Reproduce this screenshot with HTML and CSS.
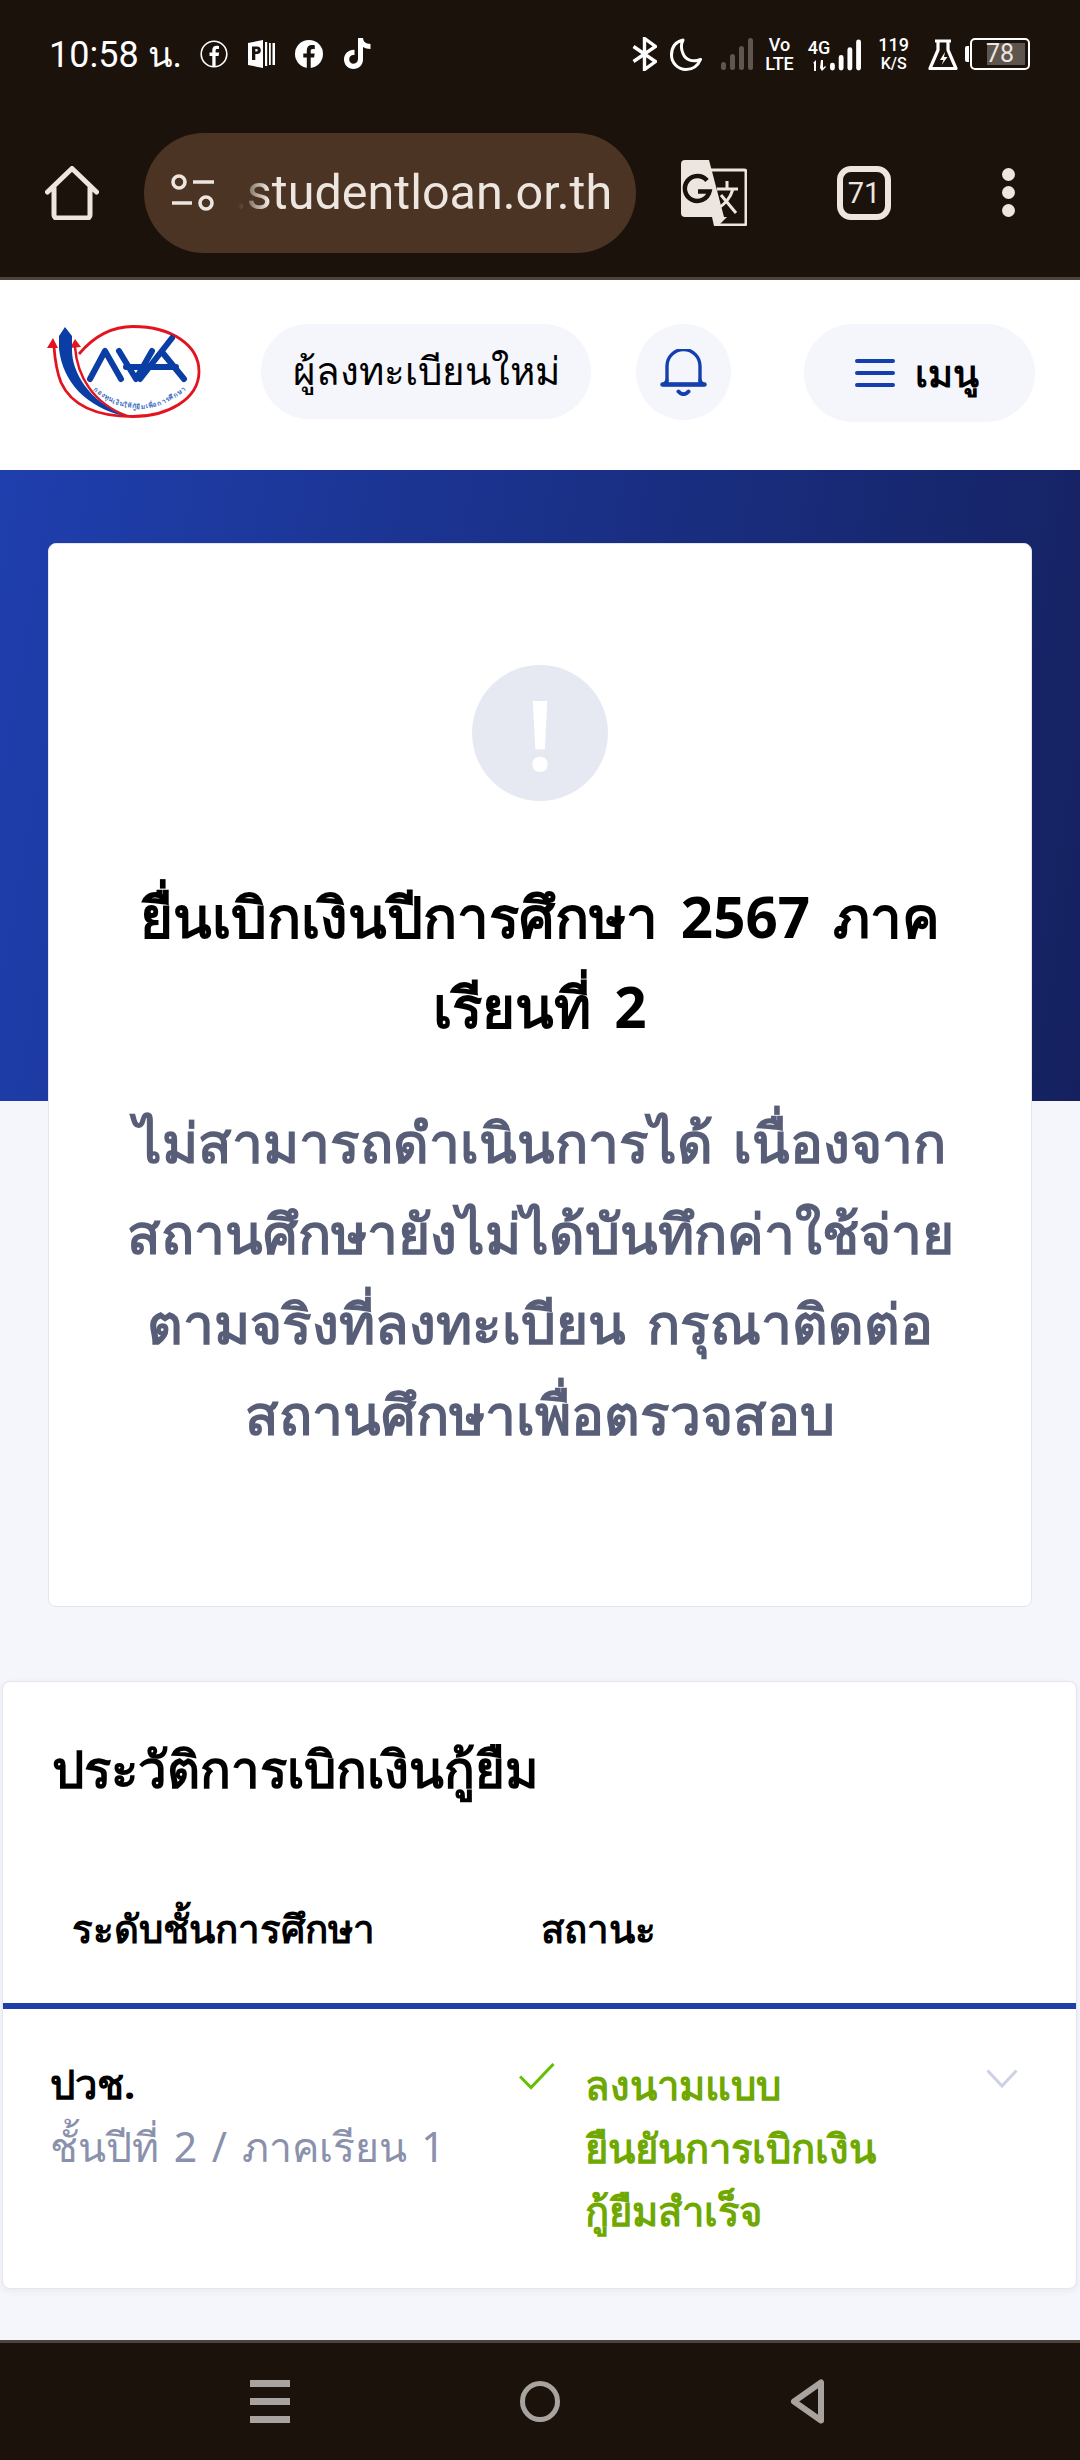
FILE: index.html
```html
<!DOCTYPE html>
<html lang="th">
<head>
<meta charset="utf-8">
<title>ประวัติการเบิกเงินกู้ยืม</title>
<link rel="stylesheet" href="styles.css">
</head>
<body>
<div class="chrome">
  <div class="status">
    <div class="status-left">
      <span class="clock">10:58 น.</span>
      <svg class="si" width="28" height="28" viewBox="0 0 28 28"><circle cx="14" cy="14" r="12.8" fill="none" stroke="#fff" stroke-width="1.6"/><path d="M15.600 26.500V16h3l.5-3.400h-3.500v-2c0-1 .5-1.700 1.800-1.700H19V6c-.6-.1-1.500-.2-2.400-.2-2.600 0-4.300 1.500-4.300 4.300v2.500H9.500V16h2.800v10.500z" fill="#fff"/></svg>
      <svg class="si" width="27" height="28" viewBox="0 0 27 28"><path d="M0 3l15-3v28L0 25z" fill="#fff"/><path d="M4 6.500h5a3.800 3.800 0 010 7.600H7.300V20H4z" fill="#1a120b"/><path d="M7.300 9v2.600h1.200a1.300 1.300 0 000-2.600z" fill="#fff"/><path d="M17 2h2.200v24H17zM21 3h1.800v22H21zM24.500 3H27v22h-2.500z" fill="#fff"/></svg>
      <svg class="si" width="28" height="28" viewBox="0 0 28 28"><circle cx="14" cy="14" r="14" fill="#fff"/><path d="M15.700 28V17.500h3.400l.6-4h-4v-2.400c0-1.200.6-2.100 2.200-2.100h1.900V5.300c-.7-.1-1.800-.3-3-.3-3 0-5 1.800-5 5.200v3.300H8.300v4h3.500V28z" fill="#1a120b"/></svg>
      <svg class="si tiktok" width="29" height="33" viewBox="0 0 29 33"><path d="M15 1h5c.3 3.500 2.600 5.800 7.500 6v5c-3 0-5.700-.7-7.500-2v12.500C20 28 15.800 32 10.500 32S1 28 1 22.500 5.500 12.500 11.500 12.800v5.300c-3-.5-5.300 1-5.300 4.400 0 2.400 1.900 4.300 4.300 4.300s4.500-1.900 4.500-4.700z" fill="#fff"/></svg>
    </div>
    <div class="status-right">
      <svg class="sb-bt" width="25" height="34" viewBox="0 0 25 34"><path d="M1.500 9.500l22 15-11 8V1.500l11 8-22 15" fill="none" stroke="#fff" stroke-width="3.400"/></svg>
      <svg class="sb-moon" width="32" height="33" viewBox="0 0 32 33"><path d="M13 2C5 4 1.500 10 1.500 17c0 8 6.500 14.500 14.500 14.500 7 0 12-4 14.500-10-8 3-15 .5-17.500-6C11 11 11 6 13 2z" fill="none" stroke="#fff" stroke-width="3" stroke-linejoin="round"/></svg>
      <svg class="sb-sig1" width="32" height="32" viewBox="0 0 32 32"><g fill="#5f574f"><rect x="0" y="24" width="5" height="8" rx="2.500"/><rect x="9" y="16" width="5" height="16" rx="2.500"/><rect x="18" y="8" width="5" height="24" rx="2.500"/><rect x="27" y="0" width="5" height="32" rx="2.500"/></g></svg>
      <div class="netlabel sb-vo"><span>Vo</span><span>LTE</span></div>
      <div class="net4g">
        <div class="netlabel"><span>4G</span>
          <svg class="arrows" width="15" height="11" viewBox="0 0 15 11"><path d="M1 3l3-3v11H2V3.500zM9 0h2v8l2-2 1 1-4 4-2-3z" fill="#fff"/></svg>
        </div>
        <svg class="sig2" width="31" height="32" viewBox="0 0 32 32"><g fill="#fff"><rect x="0" y="24" width="5" height="8" rx="2.500"/><rect x="9" y="16" width="5" height="16" rx="2.500"/><rect x="18" y="8" width="5" height="24" rx="2.500"/><rect x="27" y="0" width="5" height="32" rx="2.500"/></g></svg>
      </div>
      <div class="netlabel speed"><span>119</span><span class="ks">K/S</span></div>
      <svg class="sb-flask" width="30" height="31" viewBox="0 0 30 31"><path d="M7 2h16M10 2v9L2 29.500h26L20 11V2" fill="none" stroke="#fff" stroke-width="3.200" stroke-linejoin="round"/><path d="M17 13l-5 8h3.500l-2 5 6-8h-3.500z" fill="#fff"/></svg>
      <div class="battery"><span class="cap"></span><div class="shell"><div class="level"></div><span class="pct">78</span></div></div>
    </div>
  </div>
  <div class="toolbar">
    <svg class="home" width="54" height="54" viewBox="0 0 54 54"><path d="M2.500 26L27 2.500 51.500 26M9 22v27a3 3 0 003 3h30a3 3 0 003-3V22" fill="none" stroke="#ede5df" stroke-width="5" stroke-linecap="round" stroke-linejoin="round"/></svg>
    <div class="urlbar">
      <svg width="43" height="37" viewBox="0 0 43 37"><g fill="none" stroke="#ede5df" stroke-width="3.600"><circle cx="8" cy="8" r="6"/><circle cx="35" cy="29" r="6"/><path d="M22 8h21M1 29h20"/></g></svg>
      <span class="url">.studentloan.or.th</span>
    </div>
    <svg class="translate" width="66" height="66" viewBox="0 0 66 66"><path d="M4 0h24l15 57H4a4 4 0 01-4-4V4a4 4 0 014-4z" fill="#ede5df"/><path d="M30 10h33a2 2 0 012 2v51a2 2 0 01-2 2H34" fill="none" stroke="#ede5df" stroke-width="3"/><path d="M31 57h15l-9 9h-4z" fill="#ede5df"/><path d="M26 20.500a12.500 12.500 0 10 2.500 11H17" fill="none" stroke="#1a120b" stroke-width="4.500"/><path d="M36 29h21M46 21v8M52 29c-3 10-8 15-16 20M40 35l15 18" fill="none" stroke="#ede5df" stroke-width="3"/></svg>
    <div class="tabs">71</div>
    <div class="dots"><i></i><i></i><i></i></div>
  </div>
</div>

<header class="site-head">
  <svg class="logo" width="154" height="93" viewBox="0 0 154 93">
    <path d="M32 29C48 10 66 1.500 86 1.500c39 0 66 19 66 45 0 28-32 45-66 45-36 0-61-10-72-34C9 45 8 35 7 22" fill="none" stroke="#e3141f" stroke-width="2.800"/>
    <path d="M0 23L6 13l5 10z" fill="#e3141f"/><path d="M23 23l5-9 6 8z" fill="#e3141f"/>
    <path d="M28 22c2 28 17 56 52 69" fill="none" stroke="#e3141f" stroke-width="2.500"/>
    <path d="M18 2l7 9v14c0 22 16 50 52 66C40 82 16 58 12 24V11z" fill="#0b3ea4"/>
    <path d="M43 54l15-28 16 28M72 26l17 28 16-28M79 42h20M93 54l32-41M115 27l22 27M101 42h28" fill="none" stroke="#0b3ea4" stroke-width="6" stroke-linecap="round" stroke-linejoin="round"/>
    <path id="logoarc" d="M46 65Q92 103 140 64" fill="none"/>
    <text class="logo-text"><textPath href="#logoarc" textLength="102">กองทุนเงินให้กู้ยืมเพื่อการศึกษา</textPath></text>
  </svg>
  <div class="pill user">ผู้ลงทะเบียนใหม่</div>
  <div class="bell"><svg width="47" height="47" viewBox="0 0 47 47"><path d="M7 34V17a16.500 16.500 0 0133 0v17" fill="none" stroke="#1440ae" stroke-width="3.400"/><path d="M7 31c0 2-2 3-4 4.500h41c-2-1.500-4-2.500-4-4.500" fill="none" stroke="#1440ae" stroke-width="3.400" stroke-linecap="round" stroke-linejoin="round"/><path d="M2.500 35.500h42" stroke="#1440ae" stroke-width="4.500" stroke-linecap="round"/><path d="M18.500 42.500c3 3.500 7 3.500 10 0" fill="none" stroke="#1440ae" stroke-width="4" stroke-linecap="round"/></svg></div>
  <div class="pill menu"><svg width="40" height="28" viewBox="0 0 40 28"><path d="M2 2h36M2 14h36M2 26h36" stroke="#1440ae" stroke-width="4" stroke-linecap="round"/></svg><span>เมนู</span></div>
</header>

<main class="page">
  <div class="hero"></div>
  <section class="alert-card">
    <div class="alert-icon">!</div>
    <h1>ยื่นเบิกเงินปีการศึกษา 2567 ภาค<br>เรียนที่ 2</h1>
    <p>ไม่สามารถดำเนินการได้ เนื่องจาก<br>สถานศึกษายังไม่ได้บันทึกค่าใช้จ่าย<br>ตามจริงที่ลงทะเบียน กรุณาติดต่อ<br>สถานศึกษาเพื่อตรวจสอบ</p>
  </section>
  <section class="history">
    <h2>ประวัติการเบิกเงินกู้ยืม</h2>
    <div class="thead"><span class="th-level">ระดับชั้นการศึกษา</span><span>สถานะ</span></div>
    <div class="row">
      <div class="level-col"><strong>ปวช.</strong><span>ชั้นปีที่ 2 / ภาคเรียน 1</span></div>
      <svg class="check" width="36" height="27" viewBox="0 0 36 27"><path d="M1 13.500l11 11L34.500 1" fill="none" stroke="#62c000" stroke-width="3"/></svg>
      <div class="state">ลงนามแบบ<br>ยืนยันการเบิกเงิน<br>กู้ยืมสำเร็จ</div>
      <svg class="chev" width="32" height="19" viewBox="0 0 32 19"><path d="M1.500 1.500L16 17 30.500 1.500" fill="none" stroke="#ccd2e4" stroke-width="3"/></svg>
    </div>
  </section>
</main>

<nav class="navbar">
  <svg width="40" height="43" viewBox="0 0 40 43"><path d="M0 3.500h40M0 21.500h40M0 39.500h40" stroke="#a8a39e" stroke-width="7"/></svg>
  <svg width="40" height="41" viewBox="0 0 40 41"><ellipse cx="20" cy="20.500" rx="17.500" ry="18" fill="none" stroke="#a8a39e" stroke-width="5"/></svg>
  <svg width="35" height="45" viewBox="0 0 35 45"><path d="M31 3.500v38L4 22.500z" fill="none" stroke="#a8a39e" stroke-width="6" stroke-linejoin="round"/></svg>
</nav>
</body>
</html>
```
FILE: styles.css
```css
* { box-sizing: border-box; margin: 0; padding: 0; }
html, body { width: 1080px; height: 2460px; overflow: hidden; }
body { font-family: "Noto Sans", "Inter", "DejaVu Sans", sans-serif; background: #f4f6fb; color: #000; display: flex; flex-direction: column; }

.chrome { height: 280px; background: #1a120b; border-bottom: 3px solid #4d433b; flex: none; }
.status { height: 108px; display: flex; justify-content: space-between; align-items: center; padding: 0 50px 0 49px; color: #fff; }
.status-left { display: flex; align-items: center; gap: 20px; }
.clock { font-family: Roboto, "DejaVu Sans", sans-serif; font-size: 36px; width: 131px; white-space: nowrap; }
.tiktok { margin-top: -2px; }
.status-right { display: flex; align-items: center; }
.sb-moon { margin-left: 13px; }
.sb-sig1 { margin-left: 19px; }
.sb-vo { margin-left: 12px; }
.net4g { display: flex; align-items: flex-end; margin-left: 14px; }
.sig2 { margin-left: 0; }
.speed { margin-left: 17px; }
.sb-flask { margin-left: 19px; }
.netlabel { display: flex; flex-direction: column; align-items: center; font-family: Roboto, sans-serif; font-weight: 500; font-size: 18px; line-height: 19px; }
.netlabel .arrows { margin-top: 3px; }
.netlabel .ks { font-size: 16px; }
.battery { display: flex; align-items: center; margin-left: 7px; gap: 1px; }
.cap { width: 4px; height: 16px; background: #fff; border-radius: 2px 0 0 2px; }
.shell { position: relative; width: 60px; height: 32px; border: 2px solid #fff; border-radius: 5px; padding: 3px; }
.level { height: 100%; width: 38px; margin-left: 12px; background: #5d554e; }
.pct { position: absolute; left: 14px; top: 0; font-family: Roboto, sans-serif; font-size: 25px; line-height: 28px; color: #ede5df; }

.toolbar { height: 169px; display: flex; align-items: center; padding: 0 0 0 45px; }
.home { flex: none; }
.urlbar { margin-left: 45px; width: 492px; height: 120px; border-radius: 60px; background: #4b3423; display: flex; align-items: center; padding-left: 27px; color: #ede5df; overflow: hidden; flex: none; }
.url { margin-left: 20px; font-family: Roboto, sans-serif; font-size: 48.500px; white-space: nowrap; -webkit-mask-image: linear-gradient(to right, transparent 4px, #000 34px); mask-image: linear-gradient(to right, transparent 4px, #000 34px); }
.translate { margin-left: 45px; flex: none; }
.tabs { margin-left: 90px; width: 54px; height: 54px; border: 6px solid #ede5df; border-radius: 14px; color: #ede5df; font-family: Roboto, sans-serif; font-size: 29px; line-height: 42px; text-align: center; flex: none; }
.dots { margin-left: 111px; display: flex; flex-direction: column; gap: 5px; flex: none; }
.dots i { display: block; width: 13px; height: 13px; border-radius: 50%; background: #ede5df; }

.site-head { flex: none; height: 190px; background: #fff; display: flex; align-items: flex-start; padding: 44px 0 0 47px; }
.logo { flex: none; margin-top: 1px; }
.pill { background: #f4f6fb; display: flex; align-items: center; justify-content: center; flex: none; }
.user { margin-left: 60px; width: 330px; height: 95px; border-radius: 48px; font-size: 38.5px; white-space: nowrap; }
.bell { margin-left: 45px; width: 95px; height: 96px; border-radius: 50%; background: #f4f6fb; display: flex; align-items: center; justify-content: center; flex: none; }
.menu { margin-left: 73px; width: 231px; height: 98px; border-radius: 49px; gap: 20px; padding-right: 6px; font-size: 38px; font-weight: 700; }
.logo-text { font-size: 6.5px; font-weight: 600; fill: #3c6cc0; }

.page { position: relative; flex: 1; display: flex; flex-direction: column; align-items: flex-start; }
.hero { position: absolute; left: 0; right: 0; top: 0; height: 631px; background: linear-gradient(100deg, #1f3fae, #15215f); }
.alert-card { position: relative; margin: 73px 0 0 48px; width: 984px; height: 1064px; background: #fff; border: 1px solid #e3e6ee; border-radius: 8px; padding: 121px 0 0; display: flex; flex-direction: column; align-items: center; text-align: center; }
.alert-icon { width: 136px; height: 136px; border-radius: 50%; background: #e6e9f2; color: #fff; font-size: 98px; font-weight: 600; line-height: 136px; }
.alert-card h1 { margin-top: 71px; font-size: 56.5px; line-height: 90px; font-weight: 700; word-spacing: 8px; white-space: nowrap; }
.alert-card p { margin-top: 45px; font-size: 55px; line-height: 90.500px; font-weight: 600; word-spacing: 6px; color: #585e78; white-space: nowrap; }

.history { position: relative; margin: 74px 0 0 2px; width: 1075px; height: 608px; background: #fff; border: 1px solid #e3e6ee; border-radius: 8px; box-shadow: 0 2px 6px rgba(30,40,90,.06); }
.history h2 { padding: 51px 0 0 49px; font-size: 51px; line-height: 70px; font-weight: 600; }
.thead { margin-top: 95px; height: 111px; border-bottom: 6px solid #1f3fa8; display: flex; font-size: 38.5px; font-weight: 600; padding-left: 69px; line-height: 60px; }
.th-level { width: 469px; }
.row { display: flex; padding: 44px 0 0 47px; }
.level-col { width: 469px; flex: none; display: flex; flex-direction: column; font-size: 40px; line-height: 62px; }
.level-col span { color: #8a91ac; font-size: 41px; word-spacing: 4px; }
.check { flex: none; margin: 10px 30px 0 0; }
.state { width: 401px; color: #6ea800; font-size: 40px; line-height: 63px; font-weight: 700; flex: none; }
.chev { flex: none; margin-top: 16px; }

.navbar { flex: none; height: 120px; background: #1a120b; border-top: 3px solid #4d433b; display: flex; align-items: center; justify-content: center; gap: 230px; padding-right: 5px; }
```
